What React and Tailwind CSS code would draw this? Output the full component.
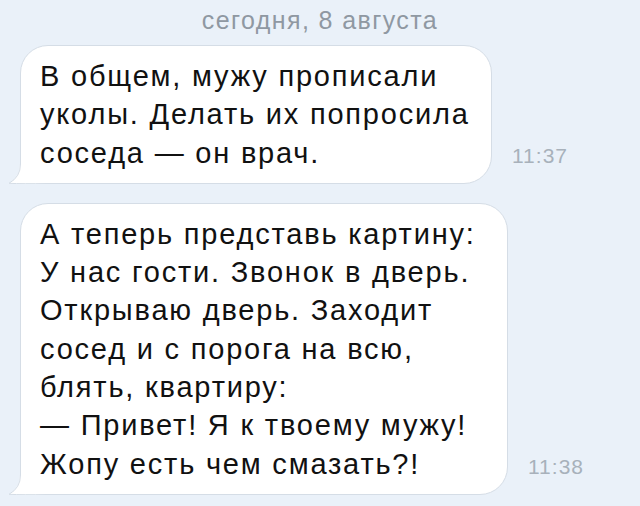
import React from "react";

const messages = [
  {
    id: 1,
    time: "11:37",
    width: "w-[472px]",
    lines: ["В общем, мужу прописали", "уколы. Делать их попросила", "соседа — он врач."],
  },
  {
    id: 2,
    time: "11:38",
    width: "w-[488px]",
    lines: [
      "А теперь представь картину:",
      "У нас гости. Звонок в дверь.",
      "Открываю дверь. Заходит",
      "сосед и с порога на всю,",
      "блять, квартиру:",
      "— Привет! Я к твоему мужу!",
      "Жопу есть чем смазать?!",
    ],
  },
];

// little hook at the bottom-left corner of an incoming bubble
function Tail() {
  return (
    <svg
      className="absolute left-[-14px] bottom-[-1px]"
      width="40"
      height="30"
      viewBox="0 0 40 30"
    >
      <path d="M13 0 V10 Q13 23 1.5 29.5 Q16 30 40 29.5 V0 Z" fill="#ffffff" />
      <path
        d="M13.5 0 V10 Q13.5 23 2 29.3 Q16 30 40 29.5"
        fill="none"
        stroke="#d5dde6"
        strokeWidth="1"
      />
    </svg>
  );
}

function Bubble({ lines, time, width }) {
  return (
    <div className="flex items-end gap-5">
      <div
        className={`relative ${width} bg-white border border-[#d5dde6] rounded-[28px] rounded-bl-none pl-[19px] pr-3 py-[11px]`}
      >
        <Tail />
        <div className="relative text-[29px] tracking-[1.8px] leading-[38.3px] text-[#111] whitespace-nowrap">
          {lines.map((l, i) => (
            <div key={i}>{l}</div>
          ))}
        </div>
      </div>
      <span className="mb-[12px] text-[21px] tracking-[1px] text-[#a8b1bb]">{time}</span>
    </div>
  );
}

export default function App() {
  return (
    <div className="w-[640px] h-[506px] overflow-hidden bg-[#eaf1f9] font-['Liberation_Sans',Arial,sans-serif]">
      <div className="pt-[4px] text-center text-[25px] tracking-[1.4px] text-[#8f98a2] leading-[32px]">
        сегодня, 8 августа
      </div>
      <div className="flex flex-col gap-[19px] pl-5 pt-[9px]">
        {messages.map((m) => (
          <Bubble key={m.id} lines={m.lines} time={m.time} width={m.width} />
        ))}
      </div>
    </div>
  );
}
